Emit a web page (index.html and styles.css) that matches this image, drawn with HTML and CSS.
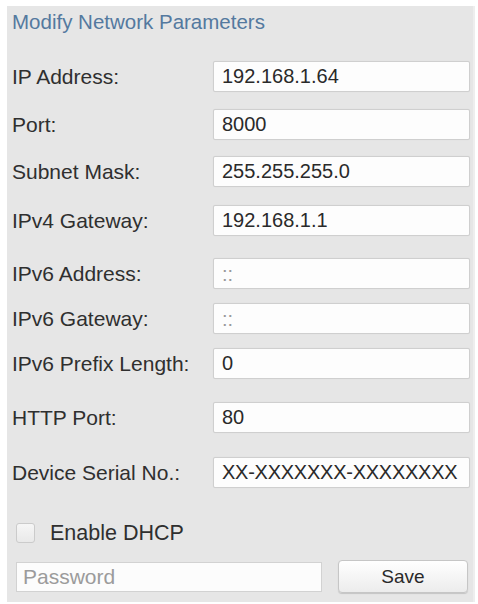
FILE: index.html
```html
<!DOCTYPE html>
<html lang="en">
<head>
<meta charset="utf-8">
<title>Modify Network Parameters</title>
<link rel="stylesheet" href="styles.css">
</head>
<body>
<div class="panel">
  <h1 class="title">Modify Network Parameters</h1>
  <div class="fields">
    <label class="lbl">IP Address:</label><input class="box" type="text" value="192.168.1.64">
    <label class="lbl">Port:</label><input class="box" type="text" value="8000">
    <label class="lbl">Subnet Mask:</label><input class="box" type="text" value="255.255.255.0">
    <label class="lbl">IPv4 Gateway:</label><input class="box" type="text" value="192.168.1.1">
    <label class="lbl">IPv6 Address:</label><input class="box box-dim" type="text" value="::">
    <label class="lbl">IPv6 Gateway:</label><input class="box box-dim" type="text" value="::">
    <label class="lbl">IPv6 Prefix Length:</label><input class="box" type="text" value="0">
    <label class="lbl">HTTP Port:</label><input class="box" type="text" value="80">
    <label class="lbl">Device Serial No.:</label><input class="box box-serial" type="text" value="XX-XXXXXXX-XXXXXXXX">
  </div>
  <label class="dhcp"><input class="check" type="checkbox"><span>Enable DHCP</span></label>
  <div class="actions">
    <input class="pwd" type="password" placeholder="Password">
    <button class="save" type="button">Save</button>
  </div>
</div>
</body>
</html>
```
FILE: styles.css
```css
* { box-sizing: border-box; }
html, body { margin: 0; padding: 0; background: #ffffff; }
body {
  font-family: "Liberation Sans", Arial, sans-serif;
  color: #333333;
}
.panel {
  margin: 6px 0 0 7px;
  width: 468px;
  height: 596px;
  background: #e6e6e6;
  border-right: 2px solid #eeeeee;
}
.title {
  margin: 0;
  padding: 5px 0 0 5px;
  font-size: 20.5px;
  line-height: 22px;
  font-weight: normal;
  color: #54799f;
}
.fields {
  margin-top: 28px;
  padding-left: 5px;
  display: grid;
  grid-template-columns: 201px 257px;
  grid-template-rows: 48px 47px 49px 53px 45px 45px 54px 55px 31px;
  align-items: start;
}
.lbl {
  font-size: 21px;
  line-height: 31px;
  color: #2f2f2f;
  white-space: nowrap;
}
.box {
  display: block;
  width: 257px;
  height: 31px;
  margin: 0;
  padding: 0 0 0 8px;
  border: 1px solid #cfcfcf;
  border-radius: 2px;
  background: #fdfdfd;
  box-shadow: 0 0 1px rgba(0,0,0,0.08);
  font-family: "Liberation Sans", Arial, sans-serif;
  font-size: 20px;
  color: #2a2a2a;
  outline: none;
}
.box-dim { color: #9a9a9a; padding-top: 1px; }
.box-serial { letter-spacing: -0.25px; padding-left: 8px; }
.dhcp {
  display: flex;
  align-items: center;
  height: 22px;
  margin-top: 34px;
  padding-left: 9px;
  font-size: 21.5px;
  color: #2f2f2f;
}
.check {
  -webkit-appearance: none;
  appearance: none;
  width: 19px;
  height: 20px;
  margin: 0 15px 0 0;
  border: 1px solid #cbcbcb;
  border-radius: 3px;
  background: linear-gradient(#f6f6f6, #e9e9e9);
}
.actions {
  display: flex;
  align-items: center;
  height: 33px;
  margin-top: 16px;
  padding-left: 9px;
  gap: 16px;
}
.pwd {
  width: 306px;
  height: 30px;
  margin: 0;
  padding: 0 0 0 6px;
  border: 1px solid #d2d2d2;
  background: #fcfcfc;
  font-family: "Liberation Sans", Arial, sans-serif;
  font-size: 21px;
  color: #333333;
  outline: none;
}
.pwd::placeholder { color: #9b9b9b; }
.save {
  width: 130px;
  height: 33px;
  margin: 0;
  padding: 0;
  border: 1px solid #c6c6c6;
  border-radius: 4px;
  background: linear-gradient(#ffffff, #ececec);
  box-shadow: 0 1px 1px rgba(0,0,0,0.15);
  font-family: "Liberation Sans", Arial, sans-serif;
  font-size: 19px;
  color: #2a2a2a;
}
```
